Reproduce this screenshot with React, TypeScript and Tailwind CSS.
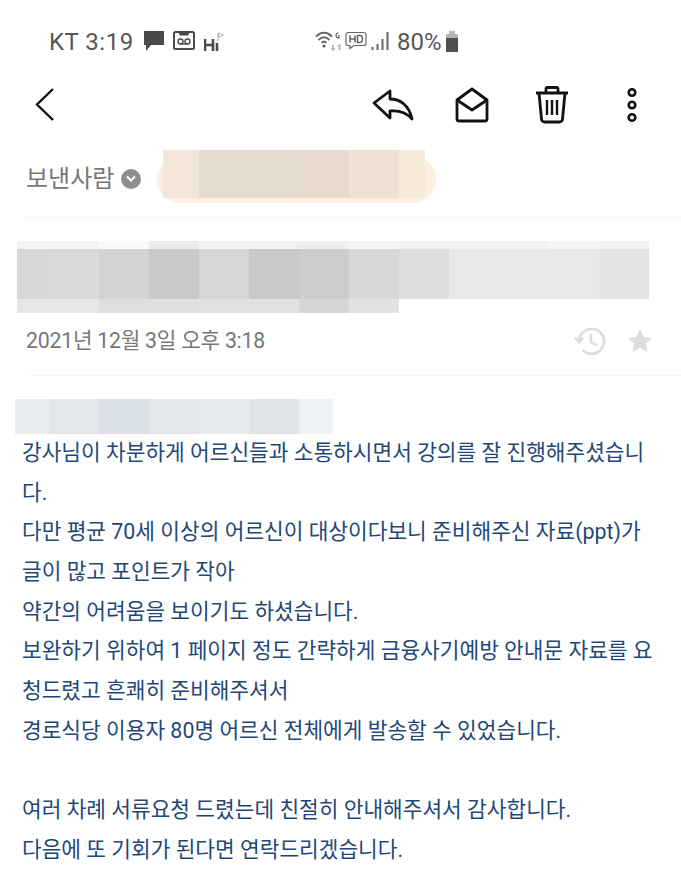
const sans = "font-['Roboto','Noto_Sans_CJK_KR',sans-serif]";

const Block = ({ w, c }: { w: number; c: string }) => (
  <div style={{ width: w, background: c }} className="h-full" />
);

const row1 = [32, 50, 50, 50, 50, 50, 50, 50, 50, 50, 50, 50, 50];
const topC = ["#f3f3f3", "#f3f3f3", "#f9f9f9", "#ebebeb", "#f2f2f2", "#f0f0f0", "#eeeeee", "#f3f3f3", "#f0f0f0", "#f2f2f2", "#f2f2f2", "#f5f5f5", "#f0f0f0"];
const midC = ["#d8d8d8", "#dadada", "#d3d3d3", "#c9c9c9", "#d7d7d7", "#c9c9c9", "#cdcdcd", "#d8d8d8", "#dddddd", "#e9e9e9", "#e9e9e9", "#e8e8e8", "#e4e4e4"];
const botC = ["#e6e6e6", "#e6e6e6", "#dedede", "#e0e0e0", "#e1e1e1", "#e1e1e1", "#d5d5d5", "#e2e2e2"];
const nameC = ["#f1e6d9", "#e6dbcf", "#e6dbcf", "#e6dbcd", "#ede2d4", "#f5e9d8"];
const nameW = [36, 50, 50, 50, 50, 26];
const greet = ["#e9ecef", "#e3e7eb", "#d9e0e7", "#e3e7eb", "#e8ebee", "#e0e5e9", "#eff2f5"];
const greetW = [34, 50, 50, 50, 50, 50, 34];

const lines = [
  "강사님이 차분하게 어르신들과 소통하시면서 강의를 잘 진행해주셨습니",
  "다.",
  "다만 평균 70세 이상의 어르신이 대상이다보니 준비해주신 자료(ppt)가",
  "글이 많고 포인트가 작아",
  "약간의 어려움을 보이기도 하셨습니다.",
  "보완하기 위하여 1 페이지 정도 간략하게 금융사기예방 안내문 자료를 요",
  "청드렸고 흔쾌히 준비해주셔서",
  "경로식당 이용자 80명 어르신 전체에게 발송할 수 있었습니다.",
  " ",
  "여러 차례 서류요청 드렸는데 친절히 안내해주셔서 감사합니다.",
  "다음에 또 기회가 된다면 연락드리겠습니다.",
];

export default function App() {
  return (
    <div className={`w-[681px] h-[886px] bg-white overflow-hidden ${sans}`}>
      {/* status bar */}
      <div className="flex items-center h-[24px] mt-[29px] pl-[49px] text-[#565656]">
        <span className="text-[24px] leading-[24px] tracking-[0.5px] w-[86px] whitespace-nowrap relative top-[1px]">KT 3:19</span>
        <svg width="22" height="22" viewBox="0 0 22 22" className="ml-[8px]">
          <path d="M1 1h20v14H8l-5 6v-6H1z" fill="#4a4a4a" />
        </svg>
        <svg width="22" height="20" viewBox="0 0 22 20" className="ml-[8px]" fill="none" stroke="#4a4a4a">
          <rect x="1" y="1" width="20" height="17" rx="1.5" strokeWidth="2" />
          <path d="M6 1l1 3h8l1-3z" fill="#4a4a4a" strokeWidth="1" />
          <circle cx="7.5" cy="10.5" r="2.5" strokeWidth="1.4" />
          <circle cx="14.5" cy="10.5" r="2.5" strokeWidth="1.4" />
          <path d="M7.5 13h7" strokeWidth="1.4" />
        </svg>
        <svg width="20" height="20" viewBox="0 0 20 20" className="ml-[9px] mt-[1px]">
          <path d="M1 7v12M9 7v12M1 13h8M13 11v8" stroke="#4a4a4a" strokeWidth="2.6" fill="none" />
          <path d="M14 1v8" stroke="#aaa" strokeWidth="1" />
          <path d="M14.500 1l5 2-5 2z" fill="none" stroke="#aaa" strokeWidth="0.8" />
        </svg>
        <svg width="26" height="20" viewBox="0 0 26 20" className="ml-[91px]" fill="none" stroke="#666">
          <path d="M1 5.500c5-5 11-5 16 0" strokeWidth="1.800" />
          <path d="M3.500 9c3.500-3.500 7.500-3.500 11 0" strokeWidth="1.800" />
          <path d="M6.500 12c2-2 3-2 5 0" strokeWidth="1.800" />
          <circle cx="9" cy="15" r="1.500" fill="#555" stroke="none" />
          <path d="M18 14v5M24.500 19v-5" stroke="#aaa" strokeWidth="1.400" />
          <path d="M16 17l2 2.500 2-2.500M22.500 16l2-2.500 2 2.500" stroke="#aaa" strokeWidth="1" />
          <path d="M23.500 2a2 2 0 1 0 0 5h.5V4.500h-1" stroke="#555" strokeWidth="1.100" />
        </svg>
        <svg width="22" height="20" viewBox="0 0 22 20" className="ml-[4px]" fill="none" stroke="#666">
          <path d="M3 1.500h16a2 2 0 0 1 2 2v9a2 2 0 0 1-2 2H9l-4 3v-3H3a2 2 0 0 1-2-2v-9a2 2 0 0 1 2-2z" strokeWidth="1.200" />
          <path d="M5 4.500v7M10 4.500v7M5 8h5" strokeWidth="1.600" />
          <path d="M12.500 4.500v7h2c2 0 3-1.500 3-3.500s-1-3.500-3-3.500z" strokeWidth="1.500" />
        </svg>
        <svg width="18" height="20" viewBox="0 0 18 20" className="ml-[4px]" stroke="#666" fill="none">
          <path d="M1.500 16v3M6.500 13v6M11.500 8v11M16.500 1v18" strokeWidth="2" />
        </svg>
        <span className="text-[24px] leading-[24px] ml-[8px] relative top-[1px]">80%</span>
        <svg width="14" height="21" viewBox="0 0 14 21" className="ml-[3px]">
          <path d="M4 0h6v3H4z" fill="#bbb" />
          <path d="M1 3h12v4H1z" fill="#b5b5b5" />
          <path d="M1 7h12v14H1z" fill="#505050" />
        </svg>
      </div>

      {/* toolbar */}
      <div className="flex items-center h-[40px] mt-[32px]">
        <svg width="20" height="36" viewBox="0 0 20 36" className="ml-[35px]" fill="none" stroke="#111" strokeWidth="2.400">
          <path d="M18 2L2 17.500 18 33" />
        </svg>
        <svg width="42" height="32" viewBox="0 0 42 32" className="ml-[317px]" fill="none" stroke="#111" strokeWidth="2.800" strokeLinejoin="round">
          <path d="M2 14L18 2v8c10 0 19 6 22 20-5-6-12-9-22-8v7z" />
        </svg>
        <svg width="34" height="36" viewBox="0 0 34 36" className="ml-[41px]" fill="none" stroke="#111" strokeWidth="2.800" strokeLinejoin="round">
          <path d="M2 13L17 2l15 11v19a2 2 0 0 1-2 2H4a2 2 0 0 1-2-2z" />
          <path d="M2 13l15 10 15-10" />
        </svg>
        <svg width="34" height="38" viewBox="0 0 34 38" className="ml-[46px]" fill="none" stroke="#111" strokeWidth="2.800" strokeLinejoin="round">
          <path d="M1 7h32M11 7V3a1.500 1.500 0 0 1 1.500-1.500h9A1.500 1.500 0 0 1 23 3v4" />
          <path d="M4 7l2.500 26a3 3 0 0 0 3 3h15a3 3 0 0 0 3-3L30 7" />
          <path d="M12 14v15M17 14v15M22 14v15" strokeWidth="2.400" />
        </svg>
        <svg width="14" height="36" viewBox="0 0 14 36" className="ml-[56px]" fill="none" stroke="#111" strokeWidth="2.600">
          <circle cx="7" cy="5.500" r="3.300" />
          <circle cx="7" cy="18" r="3.300" />
          <circle cx="7" cy="30.500" r="3.300" />
        </svg>
      </div>

      {/* sender */}
      <div className="flex items-center h-[52px] mt-[28px]">
        <span className="ml-[26px] text-[24px] leading-[30px] text-[#777777] whitespace-nowrap">보낸사람</span>
        <div className="ml-[7px] w-[20px] h-[20px] rounded-full bg-[#8f8f8f] flex items-center justify-center">
          <svg width="10" height="8" viewBox="0 0 10 8" fill="none" stroke="white" strokeWidth="2">
            <path d="M1 1.500l4 4 4-4" />
          </svg>
        </div>
        <div className="ml-[16px] h-[47px] w-[279px] rounded-[23px] bg-[#fdf0e0] relative">
          <div className="absolute left-[6px] top-[-6px] h-[48px] flex">
            {nameW.map((w, i) => (
              <Block key={i} w={w} c={nameC[i]} />
            ))}
          </div>
        </div>
      </div>

      <div className="ml-[20px] h-px bg-[#f5f5f5] mt-[12px]" />

      {/* subject */}
      <div className="ml-[17px] mt-[23px] w-[632px]">
        <div className="flex h-[8px]">
          {row1.map((w, i) => (
            <Block key={i} w={w} c={topC[i]} />
          ))}
        </div>
        <div className="flex h-[50px]">
          {row1.map((w, i) => (
            <Block key={i} w={w} c={midC[i]} />
          ))}
        </div>
        <div className="flex h-[14px]">
          {row1.slice(0, 8).map((w, i) => (
            <Block key={i} w={w} c={botC[i]} />
          ))}
        </div>
      </div>

      {/* date */}
      <div className="flex items-center h-[30px] mt-[13px]">
        <span className="ml-[26px] text-[21.3px] leading-[30px] text-[#777777] tracking-[-0.25px] whitespace-nowrap">2021년 12월 3일 오후 3:18</span>
        <svg width="32" height="32" viewBox="0 0 32 32" className="ml-auto" fill="none" stroke="#dcdcdc" strokeWidth="2.600">
          <path d="M5 16a12.500 12.500 0 1 1 3.500 9" />
          <path d="M1 12.500l4 4.500 4-4.500" />
          <path d="M17 9v8l6 3.500" />
        </svg>
        <svg width="26" height="26" viewBox="0 0 24 24" className="ml-[21px] mr-[28px]" fill="#dcdcdc">
          <path d="M12 1l3.300 7.300 7.700.8-5.800 5.200 1.700 7.700L12 18l-6.900 4 1.700-7.700L1 9.100l7.700-.8z" />
        </svg>
      </div>

      <div className="ml-[26px] h-px bg-[#f7f7f7] mt-[19px]" />

      {/* greeting redaction */}
      <div className="ml-[15px] mt-[23px] flex h-[35px]">
        {greetW.map((w, i) => (
          <Block key={i} w={w} c={greet[i]} />
        ))}
      </div>

      {/* body */}
      <div className="ml-[22px] mt-[-1px] w-[655px] text-[21.4px] leading-[39.7px] text-[#1f4878]">
        {lines.map((l, i) => (
          <div key={i} className="whitespace-pre h-[39.7px]">
            {l}
          </div>
        ))}
      </div>
    </div>
  );
}
